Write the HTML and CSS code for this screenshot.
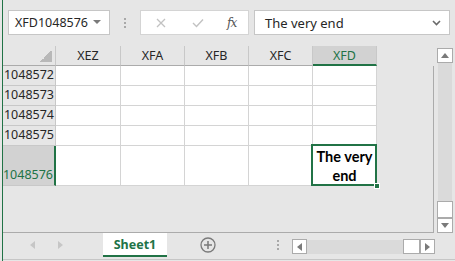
FILE: index.html
```html
<!DOCTYPE html>
<html lang="en">
<head>
    <meta charset="UTF-8">
    <meta name="viewport" content="width=device-width, initial-scale=1.0">
    <title>Sheet1 - The very end</title>
    <link rel="stylesheet" href="styles.css">
</head>
<body>
    <div class="app">
        <div class="formula-bar">
            <div class="name-box">
                <span>XFD1048576</span>
                <svg class="caret" width="8" height="5" viewBox="0 0 8 5"><path d="M0 0 L8 0 L4 4 Z" fill="#7a7a7a"/></svg>
            </div>
            <div class="grip"><i></i><i></i><i></i></div>
            <div class="fx-buttons">
                <svg width="10" height="10" viewBox="0 0 10 10"><path d="M1 1 L9 9 M9 1 L1 9" stroke="#c2c2c2" stroke-width="1.3"/></svg>
                <svg width="12" height="10" viewBox="0 0 12 10"><path d="M1 5 L4.5 8.5 L11 1.5" stroke="#c2c2c2" stroke-width="1.4" fill="none"/></svg>
                <span class="fx">fx</span>
            </div>
            <div class="formula-input">
                <span>The very end</span>
                <svg width="9" height="6" viewBox="0 0 9 6"><path d="M1 1 L4.5 4.5 L8 1" stroke="#6a6a6a" stroke-width="1.6" fill="none"/></svg>
            </div>
        </div>

        <div class="workspace">
            <div class="sheet">
                <div class="col-headers">
                    <div class="corner"><span class="corner-tri"></span></div>
                    <div class="col-head">XEZ</div>
                    <div class="col-head">XFA</div>
                    <div class="col-head">XFB</div>
                    <div class="col-head">XFC</div>
                    <div class="col-head active">XFD</div>
                </div>
                <div class="rows">
                    <div class="row">
                        <div class="row-head">1048572</div>
                        <div class="cell"></div><div class="cell"></div><div class="cell"></div><div class="cell"></div><div class="cell"></div>
                    </div>
                    <div class="row">
                        <div class="row-head">1048573</div>
                        <div class="cell"></div><div class="cell"></div><div class="cell"></div><div class="cell"></div><div class="cell"></div>
                    </div>
                    <div class="row">
                        <div class="row-head">1048574</div>
                        <div class="cell"></div><div class="cell"></div><div class="cell"></div><div class="cell"></div><div class="cell"></div>
                    </div>
                    <div class="row">
                        <div class="row-head">1048575</div>
                        <div class="cell"></div><div class="cell"></div><div class="cell"></div><div class="cell"></div><div class="cell"></div>
                    </div>
                    <div class="row tall">
                        <div class="row-head active">1048576</div>
                        <div class="cell"></div><div class="cell"></div><div class="cell"></div><div class="cell"></div>
                        <div class="cell selected">The very<br>end<span class="fill-handle"></span></div>
                    </div>
                </div>
            </div>
            <div class="vscroll">
                <div class="sb-btn"><svg width="8" height="5" viewBox="0 0 8 5"><path d="M0 5 L8 5 L4 0 Z" fill="#7a7a7a"/></svg></div>
                <div class="sb-track"></div>
                <div class="sb-thumb"></div>
                <div class="sb-btn"><svg width="8" height="5" viewBox="0 0 8 5"><path d="M0 0 L8 0 L4 5 Z" fill="#7a7a7a"/></svg></div>
            </div>
        </div>

        <div class="tabbar">
            <div class="tab-nav">
                <svg width="5" height="8" viewBox="0 0 5 8"><path d="M5 0 L5 8 L0 4 Z" fill="#c6c6c6"/></svg>
                <svg width="5" height="8" viewBox="0 0 5 8"><path d="M0 0 L0 8 L5 4 Z" fill="#c6c6c6"/></svg>
            </div>
            <div class="sheet-tab">Sheet1</div>
            <div class="add-sheet">
                <svg width="16" height="16" viewBox="0 0 16 16"><circle cx="8" cy="8" r="7" stroke="#7a7a7a" stroke-width="1.3" fill="none"/><path d="M8 4 V12 M4 8 H12" stroke="#7a7a7a" stroke-width="1.5"/></svg>
            </div>
            <div class="grip small"><i></i><i></i><i></i></div>
            <div class="hscroll">
                <div class="sb-btn"><svg width="5" height="8" viewBox="0 0 5 8"><path d="M5 0 L5 8 L0 4 Z" fill="#7a7a7a"/></svg></div>
                <div class="sb-track"></div>
                <div class="sb-thumb"></div>
                <div class="sb-btn"><svg width="5" height="8" viewBox="0 0 5 8"><path d="M0 0 L0 8 L5 4 Z" fill="#7a7a7a"/></svg></div>
            </div>
        </div>
    </div>
</body>
</html>
```

FILE: styles.css
```css
* {
    margin: 0;
    padding: 0;
    box-sizing: border-box;
}

body {
    background-color: #e6e6e6;
    font-family: 'Noto Sans', 'Open Sans', sans-serif;
    color: #262626;
    overflow: hidden;
}

.app {
    width: 453px;
    height: 261px;
    margin-left: 2px;
    border-left: 1px solid #217346;
    display: flex;
    flex-direction: column;
}

/* formula bar */

.formula-bar {
    height: 46px;
    padding: 10px 0 0 5px;
    display: flex;
    align-items: flex-start;
}

.name-box {
    width: 102px;
    height: 25px;
    background-color: white;
    border: 1px solid #c6c6c6;
    display: flex;
    align-items: center;
    justify-content: space-between;
    padding: 0 8px 0 6px;
    font-size: 12.5px;
    color: #262626;
}

.grip {
    width: 30px;
    height: 25px;
    display: flex;
    flex-direction: column;
    align-items: center;
    justify-content: center;
    gap: 2px;
}

.grip i {
    width: 2px;
    height: 2px;
    background-color: #a8a8a8;
}

.fx-buttons {
    width: 109px;
    height: 25px;
    background-color: white;
    border: 1px solid #d4d4d4;
    display: flex;
    align-items: center;
    padding-left: 15px;
    gap: 26px;
}

.fx {
    font-family: 'DejaVu Serif', serif;
    font-style: italic;
    font-size: 12px;
    color: #555;
    margin-left: -3px;
    letter-spacing: -1px;
}

.formula-input {
    width: 196px;
    height: 25px;
    margin-left: 5px;
    background-color: white;
    border: 1px solid #c6c6c6;
    display: flex;
    align-items: center;
    justify-content: space-between;
    padding: 0 8px 0 10px;
    font-size: 13px;
    color: #262626;
}

/* sheet */

.workspace {
    height: 187px;
    display: flex;
}

.sheet {
    width: 432px;
    display: flex;
    flex-direction: column;
    border-bottom: 1px solid #ababab;
}

.col-headers,
.row {
    display: grid;
    grid-template-columns: 53px 65px 64px 64px 64px 64px;
}

.col-headers {
    height: 20px;
}

.corner,
.col-head,
.row-head {
    border-right: 1px solid #c8c8c8;
    border-bottom: 1px solid #ababab;
    font-size: 12.5px;
    color: #262626;
}

.corner {
    display: flex;
    align-items: flex-end;
    justify-content: flex-end;
    padding: 0 3px 3px 0;
}

.corner-tri {
    width: 12px;
    height: 12px;
    background: linear-gradient(to bottom right, transparent 50%, #b8b8b8 50%);
}

.col-head {
    display: flex;
    align-items: center;
    justify-content: center;
}

.col-head.active {
    background-color: #d2d2d2;
    color: #217346;
    border-bottom: 2px solid #217346;
}

.rows {
    flex: 1;
    border-right: 1px solid #ababab;
}

.row {
    height: 20px;
}

.row.tall {
    height: 40px;
}

.row-head {
    display: flex;
    align-items: flex-end;
    justify-content: flex-end;
    padding: 0 1px 1px 0;
    border-bottom-color: #c8c8c8;
    line-height: 18px;
}

.row-head.active {
    background-color: #d2d2d2;
    color: #217346;
    border-right: 2px solid #217346;
}

.cell {
    background-color: white;
    border-right: 1px solid #d4d4d4;
    border-bottom: 1px solid #d4d4d4;
}

.cell.selected {
    position: relative;
    font-family: 'Lato', 'Carlito', sans-serif;
    font-weight: bold;
    font-size: 14.5px;
    line-height: 19px;
    text-align: center;
    color: #000;
    padding-top: 1px;
}

.cell.selected::after {
    content: '';
    position: absolute;
    top: -2px;
    left: -2px;
    right: -1px;
    bottom: -1px;
    border: 2px solid #217346;
}

.fill-handle {
    position: absolute;
    right: -4px;
    bottom: -4px;
    width: 6px;
    height: 6px;
    background-color: #217346;
    border: 1px solid white;
    z-index: 1;
}

/* scrollbars */

.vscroll {
    width: 21px;
    padding: 2px 0 0 3px;
    display: flex;
    flex-direction: column;
}

.sb-btn {
    width: 16px;
    height: 15px;
    background-color: white;
    border: 1px solid #ababab;
    display: flex;
    align-items: center;
    justify-content: center;
}

.vscroll .sb-track {
    flex: 1;
    margin-left: 1px;
    width: 14px;
    background-color: #dadada;
}

.vscroll .sb-thumb {
    width: 16px;
    height: 17px;
    background-color: white;
    border: 1px solid #ababab;
}

/* tab bar */

.tabbar {
    height: 27px;
    display: flex;
    align-items: flex-start;
    border-bottom: 1px solid #c6c6c6;
}

.tab-nav {
    width: 100px;
    height: 24px;
    display: flex;
    align-items: center;
    padding-left: 27px;
    gap: 23px;
}

.sheet-tab {
    width: 64px;
    height: 24px;
    background-color: white;
    border-bottom: 2px solid #217346;
    color: #217346;
    font-weight: bold;
    font-size: 12.5px;
    display: flex;
    align-items: center;
    justify-content: center;
}

.add-sheet {
    width: 96px;
    height: 24px;
    display: flex;
    align-items: center;
    padding-left: 33px;
}

.grip.small {
    width: 29px;
    height: 24px;
}

.hscroll {
    margin-top: 6px;
    width: 143px;
    height: 15px;
    display: flex;
}

.hscroll .sb-btn {
    width: 15px;
}

.hscroll .sb-track {
    flex: 1;
    height: 14px;
    margin-top: 1px;
    background-color: #dadada;
}

.hscroll .sb-thumb {
    width: 17px;
    height: 15px;
    background-color: white;
    border: 1px solid #ababab;
}
```
